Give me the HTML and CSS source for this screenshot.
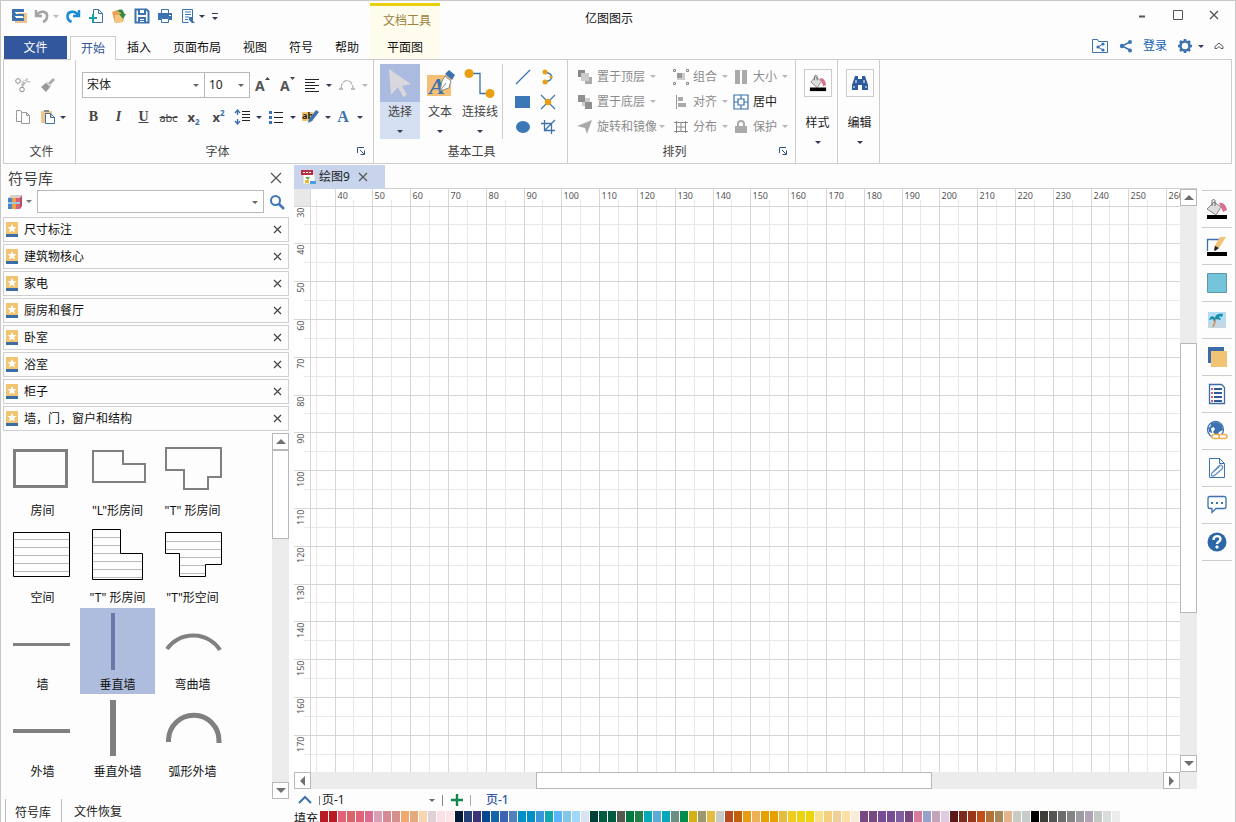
FILE: index.html
```html
<!DOCTYPE html>
<html lang="zh-CN">
<head>
<meta charset="utf-8">
<title>亿图图示</title>
<link rel="stylesheet" href="styles.css">
</head>
<body>
<div class="window">
  <header class="header">
    <div class="header-left">
      <div class="quick">
        <svg class="logo" width="16" height="16" viewBox="0 0 16 16" aria-hidden="true"><path d="M7 5h9v10H4v-3h8V9H7z" fill="#eec48a"/><path d="M1 1h12v3H5v2h8v3H5v1h8v3H1z" fill="#3c72b0"/><path d="M4 4h8v1H4zM4 8h8v1H4z" fill="#fff"/></svg>
        <button class="q" aria-label="撤销"><svg width="16" height="16" viewBox="0 0 16 16"><path d="M2 2v6h6" fill="none" stroke="#a4a4a4" stroke-width="2.400"/><path d="M3 7C6 2 14 3 13 9c0 3-2 4-4 5" fill="none" stroke="#a4a4a4" stroke-width="2.600"/></svg></button>
        <button class="q q-arrow" aria-label="撤销列表"><i class="caret pale"></i></button>
        <button class="q" aria-label="重做"><svg width="16" height="16" viewBox="0 0 16 16"><path d="M14 2v6H8" fill="none" stroke="#1c8cd4" stroke-width="2.400"/><path d="M13 7C10 2 2 3 2.500 9c0 3 2 4 4 5" fill="none" stroke="#1c8cd4" stroke-width="2.600"/></svg></button>
        <button class="q" aria-label="新建"><svg width="16" height="16" viewBox="0 0 16 16"><path d="M5.500 6V1.500h5l4 4v9h-9V12M10.500 1.500v4h4" fill="#fff" stroke="#3c72b0"/><path d="M4 6h2v3h3v2H6v4H4v-4H1V9h3z" fill="#12a0a8"/></svg></button>
        <button class="q" aria-label="打开"><svg width="16" height="16" viewBox="0 0 16 16"><path d="M1 4l5-2 2 2 6 1-2 9-8 1z" fill="#e8a254"/><path d="M4 7l10-1-3 8-7 1z" fill="#f4c87c"/><path d="M6 3c4-3 7-1 7 3h2l-3 5-4-5h2c0-2-2-2-4-3z" fill="#2f8a4a"/></svg></button>
        <button class="q" aria-label="保存"><svg width="16" height="16" viewBox="0 0 16 16"><path d="M1.500 1.500h11l2 2v11h-13z" fill="#fff" stroke="#3c72b0" stroke-width="2"/><path d="M4 1h8v6H4zM4 9h8v6H4z" fill="#3c72b0"/><path d="M6 2h4v3H6zM6 11h4v1H6zM6 13h4v1H6z" fill="#fff"/></svg></button>
        <button class="q" aria-label="打印"><svg width="16" height="16" viewBox="0 0 16 16"><path d="M4.500 6V1.500h7V6" fill="#fff" stroke="#3c72b0"/><path d="M1 5h14v7h-3v-2H4v2H1z" fill="#3c72b0"/><path d="M4.500 10.500h7v4h-7z" fill="#fff" stroke="#3c72b0"/><path d="M12 7h2v1h-2z" fill="#fff"/></svg></button>
        <button class="q" aria-label="预览"><svg width="16" height="16" viewBox="0 0 16 16"><path d="M12.500 9V1.500h-10v13h6" fill="#fff" stroke="#3c72b0"/><path d="M5 4h6M5 6.500h6M5 9h4M5 11.500h3" stroke="#3c72b0"/><path d="M9 9h4v4l2 2h-3l-3-3z" fill="#3c72b0"/></svg></button>
        <button class="q q-arrow" aria-label="预览列表"><i class="caret"></i></button>
        <button class="q q-arrow" aria-label="自定义"><i class="more"></i></button>
      </div>
      <nav class="tabs">
        <button class="tab file">文件</button>
        <button class="tab active">开始</button>
        <button class="tab">插入</button>
        <button class="tab">页面布局</button>
        <button class="tab">视图</button>
        <button class="tab">符号</button>
        <button class="tab">帮助</button>
      </nav>
    </div>
    <div class="context">
      <span class="context-title">文档工具</span>
      <button class="tab context-tab">平面图</button>
    </div>
    <div class="header-right">
      <div class="titlebar">
        <h1 class="title">亿图图示</h1>
        <div class="winbtns">
          <button aria-label="最小化"><svg width="10" height="10" viewBox="0 0 10 10"><path d="M2 6.500h6" stroke="#555" stroke-width="2"/></svg></button>
          <button aria-label="最大化"><svg width="10" height="10" viewBox="0 0 10 10"><path d="M.5.5h9v9h-9z" fill="none" stroke="#555"/></svg></button>
          <button aria-label="关闭"><svg width="10" height="10" viewBox="0 0 10 10"><path d="M1 1l8 8M9 1L1 9" stroke="#555" stroke-width="1.300"/></svg></button>
        </div>
      </div>
      <div class="account">
        <button aria-label="共享文件夹"><svg width="18" height="16" viewBox="0 0 18 16"><path d="M1.500 14.500v-13h5l1 2h9v11z" fill="none" stroke="#3c72b0"/><path d="M12 6L7 9l5 3" fill="none" stroke="#3c72b0"/><circle cx="12" cy="6" r="1.600" fill="#3c72b0"/><circle cx="7" cy="9" r="1.600" fill="#3c72b0"/><circle cx="12" cy="12" r="1.600" fill="#3c72b0"/></svg></button>
        <button aria-label="分享"><svg width="14" height="14" viewBox="0 0 14 14"><path d="M11 3L3 7l8 4" fill="none" stroke="#3c72b0" stroke-width="1.500"/><circle cx="11" cy="3" r="2" fill="#3c72b0"/><circle cx="3" cy="7" r="2.200" fill="#3c72b0"/><circle cx="11" cy="11.500" r="2" fill="#3c72b0"/></svg></button>
        <a href="#login">登录</a>
        <button aria-label="设置"><svg width="16" height="16" viewBox="0 0 16 16"><circle cx="8" cy="8" r="4.500" fill="none" stroke="#3c72b0" stroke-width="2.600"/><path d="M8 1v2M8 13v2M1 8h2M13 8h2M3 3l1.500 1.500M11.500 11.500L13 13M13 3l-1.500 1.500M4.500 11.500L3 13" stroke="#3c72b0" stroke-width="2.600"/></svg></button>
        <i class="caret"></i>
        <button class="fold" aria-label="折叠功能区"><svg width="10" height="10" viewBox="0 0 10 10"><path d="M1 5.500L5 2l4 3.500v2H7L5 5.500 3 7.500H1z" fill="none" stroke="#555"/></svg></button>
      </div>
    </div>
  </header>

  <section class="ribbon">
    <div class="group g-file">
      <div class="rows">
        <div class="row">
          <button class="b" aria-label="剪切"><svg width="18" height="16" viewBox="0 0 18 16"><circle cx="4" cy="4" r="2.300" fill="none" stroke="#8c8c8c"/><circle cx="8" cy="12.500" r="2.300" fill="none" stroke="#8c8c8c"/><path d="M6 4.500l10 1 1-1-7-1M8 10L7 7l6-6 1 1-5 8" fill="#bbb"/></svg></button>
          <button class="b" aria-label="格式刷"><svg width="16" height="16" viewBox="0 0 16 16"><path d="M13 1l2 2-5 5-2-2z" fill="#aaa"/><path d="M7 5l4 4-5 6-5-5z" fill="#999"/><path d="M7 5l4 4-1 1-4-4z" fill="#ddd"/></svg></button>
        </div>
        <div class="row">
          <button class="b" aria-label="复制"><svg width="18" height="16" viewBox="0 0 18 16"><path d="M2.500 1.500h4l3 3v8h-7z" fill="#fff" stroke="#999"/><path d="M7.500 3.500h5l3 3v8h-8zM12.500 3.500v3h3" fill="#fff" stroke="#999"/></svg></button>
          <button class="b" aria-label="粘贴"><svg width="16" height="16" viewBox="0 0 16 16"><path d="M1 2h11v12H1z" fill="#eec88c"/><path d="M4 1h5v2H4z" fill="#888"/><path d="M5.500 4.500h5l4 4v6h-9zM10.500 4.500v4h4" fill="#fff" stroke="#3c72b0"/></svg></button>
          <i class="caret"></i>
        </div>
      </div>
      <div class="group-label">文件</div>
    </div>

    <div class="group g-font">
      <div class="rows">
        <div class="row">
          <span class="combo font-name"><select aria-label="字体"><option>宋体</option></select></span>
          <span class="combo font-size"><select aria-label="字号"><option>10</option></select></span>
          <button class="b" aria-label="增大字号"><svg width="18" height="18" viewBox="0 0 18 18"><text x="1" y="15" class="gA">A</text><path d="M11 4l2.500-3L16 4z" fill="#444"/></svg></button>
          <button class="b" aria-label="减小字号"><svg width="18" height="18" viewBox="0 0 18 18"><text x="1" y="15" class="gA">A</text><path d="M11 1h5l-2.500 3z" fill="#444"/></svg></button>
          <button class="b split" aria-label="对齐"><svg width="16" height="14" viewBox="0 0 16 14"><path d="M1 1.500h14M1 4.500h10M1 7.500h14M1 10.500h10M1 13.500h14" stroke="#222"/></svg><i class="caret"></i></button>
          <button class="b split" aria-label="弧形文字"><svg width="18" height="14" viewBox="0 0 18 14"><path d="M3 10C4 0 14 0 15 10" fill="none" stroke="#aaa" stroke-width="1.200" stroke-dasharray="5 1"/><path d="M1 10h4v2H1zM13 10h4v2h-4z" fill="#bbb"/></svg><i class="caret pale"></i></button>
        </div>
        <div class="row row2">
          <button class="b g bold">B</button>
          <button class="b g ital">I</button>
          <button class="b g und">U</button>
          <button class="b g strike">abc</button>
          <button class="b g ss">x<sub>2</sub></button>
          <button class="b g ss">x<sup>2</sup></button>
          <button class="b split" aria-label="行距"><svg width="16" height="16" viewBox="0 0 16 16"><path d="M3.500 1v5M3.500 10v5M1 4l2.500-3L6 4M1 12l2.500 3L6 12" fill="none" stroke="#3c72b0" stroke-width="1.400"/><path d="M8 2.500h8M8 5.500h8M8 8.500h8M8 11.500h8" stroke="#222"/></svg><i class="caret"></i></button>
          <button class="b split" aria-label="项目符号"><svg width="16" height="16" viewBox="0 0 16 16"><path d="M1 2h3v3H1zM1 7h3v3H1zM1 12h3v3H1z" fill="#3c72b0"/><path d="M6 3.500h9M6 8.500h9M6 13.500h9" stroke="#222"/></svg><i class="caret"></i></button>
          <button class="b split" aria-label="突出显示"><svg width="18" height="16" viewBox="0 0 18 16"><path d="M1 3h11v9H1z" fill="#f4c46c"/><text x="1" y="10" class="gab">ab</text><path d="M15 1l3 2-7 9-4 2 1-4z" fill="#3c72b0"/></svg><i class="caret"></i></button>
          <button class="b split fontcolor" aria-label="字体颜色">A<i class="caret"></i></button>
        </div>
      </div>
      <div class="group-label">字体</div>
      <button class="launch" aria-label="字体设置"><svg width="8" height="8" viewBox="0 0 8 8"><path d="M.5 6V.5H7M3 3l4 4M7.500 3.500v4h-4" fill="none" stroke="#2c5488"/></svg></button>
    </div>

    <div class="group g-basic">
      <div class="basic">
        <button class="big selected"><span class="pic"><svg width="26" height="32" viewBox="0 0 26 32"><path d="M2 2l22 15-9 2 5 9-4 2-5-10-7 8z" fill="#d8d8dc"/></svg></span>选择<i class="caret"></i></button>
        <button class="big"><span class="pic"><svg width="30" height="32" viewBox="0 0 30 32"><path d="M2 8h24v21H2z" fill="#f4c078"/><text x="4" y="27" class="gTxt">A</text><path d="M20 9l6 5-2 7-9 3 2-10z" fill="#fff" stroke="#888"/><path d="M15 24l6-8" stroke="#888"/><path d="M24 3l6 5-3 5-7-6z" fill="#3c72b0"/></svg></span>文本<i class="caret"></i></button>
        <button class="big"><span class="pic"><svg width="34" height="32" viewBox="0 0 34 32"><path d="M6 6.500h11v20h10" fill="none" stroke="#3c72b0" stroke-width="1.300"/><circle cx="6" cy="6.500" r="4.500" fill="#e8a010"/><circle cx="27" cy="26.500" r="4.500" fill="#e8a010"/></svg></span>连接线<i class="caret"></i></button>
        <div class="shapes">
          <button aria-label="直线"><svg width="16" height="16" viewBox="0 0 16 16"><path d="M1 15L15 1" stroke="#3c72b0" stroke-width="1.200"/></svg></button>
          <button aria-label="弧线"><svg width="16" height="16" viewBox="0 0 16 16"><path d="M5 3c9 2 9 8 0 10" fill="none" stroke="#3c72b0" stroke-width="1.300"/><circle cx="5" cy="3" r="2.500" fill="#e8a010"/><circle cx="5" cy="13" r="2.500" fill="#e8a010"/><circle cx="11" cy="8" r="1.500" fill="#e8a010"/></svg></button>
          <button aria-label="矩形"><svg width="16" height="16" viewBox="0 0 16 16"><path d="M0 2h15v12H0z" fill="#3c78b8"/></svg></button>
          <button aria-label="连接点"><svg width="16" height="16" viewBox="0 0 16 16"><path d="M1 1l14 14M15 1L1 15" stroke="#3c72b0" stroke-width="1.200"/><circle cx="8" cy="8" r="3.200" fill="#e8a010"/></svg></button>
          <button aria-label="椭圆"><svg width="16" height="16" viewBox="0 0 16 16"><ellipse cx="8" cy="8" rx="7" ry="6" fill="#3c78b8"/></svg></button>
          <button aria-label="裁剪"><svg width="16" height="16" viewBox="0 0 16 16"><path d="M4.500 1v10.500H15M1 4.500h10.500V15M15 1L4.500 11.500" fill="none" stroke="#3c72b0" stroke-width="1.300"/></svg></button>
        </div>
      </div>
      <div class="group-label">基本工具</div>
    </div>

    <div class="group g-arrange">
      <div class="arrange">
        <button class="cmd"><svg width="16" height="16" viewBox="0 0 16 16"><path d="M1 1h7v7H1z" fill="#888"/><path d="M8 8h7v7H8z" fill="#aaa"/><path d="M4 4h8v8H4z" fill="#ccc"/></svg>置于顶层<i class="caret pale"></i></button>
        <button class="cmd"><svg width="16" height="16" viewBox="0 0 16 16"><path d="M4 4h8v7H4z" fill="#ccc"/><path d="M4 4h5v5H4z" fill="#999"/><path d="M.5.5h2v2h-2zM13.500.5h2v2h-2zM.5 13.500h2v2h-2zM13.500 13.500h2v2h-2z" fill="#fff" stroke="#888"/></svg>组合<i class="caret pale"></i></button>
        <button class="cmd"><svg width="16" height="16" viewBox="0 0 16 16"><path d="M2 1h5v14H2zM9 1h5v14H9z" fill="#aaa"/></svg>大小<i class="caret pale"></i></button>
        <button class="cmd"><svg width="16" height="16" viewBox="0 0 16 16"><path d="M5 4h8v8H5z" fill="#ccc"/><path d="M1 1h7v7H1zM8 8h7v7H8z" fill="#909090"/></svg>置于底层<i class="caret pale"></i></button>
        <button class="cmd"><svg width="16" height="16" viewBox="0 0 16 16"><path d="M3.500 1v14" stroke="#999"/><path d="M5 3h5v4H5zM5 9h8v4H5z" fill="#aaa"/></svg>对齐<i class="caret pale"></i></button>
        <button class="cmd on"><svg width="16" height="16" viewBox="0 0 16 16"><path d="M1 1h14v14H1zM5 5h6v6H5zM8 1v4M8 11v4M1 8h4M11 8h4" fill="none" stroke="#3c72b0" stroke-width="1.200"/></svg>居中</button>
        <button class="cmd"><svg width="16" height="16" viewBox="0 0 16 16"><path d="M15 1L10 15 8 9 0 7z" fill="#aaa"/></svg>旋转和镜像<i class="caret pale"></i></button>
        <button class="cmd"><svg width="16" height="16" viewBox="0 0 16 16"><path d="M3.500 2v12M12.500 2v12M1 3.500h14M1 12.500h14M4 8h8M8 4v8" fill="none" stroke="#888"/></svg>分布<i class="caret pale"></i></button>
        <button class="cmd"><svg width="16" height="16" viewBox="0 0 16 16"><path d="M2 7h12v7H2z" fill="#aaa"/><path d="M5 8V5c0-4 6-4 6 0v3" fill="none" stroke="#aaa" stroke-width="2"/></svg>保护<i class="caret pale"></i></button>
      </div>
      <div class="group-label">排列</div>
      <button class="launch" aria-label="排列设置"><svg width="8" height="8" viewBox="0 0 8 8"><path d="M.5 6V.5H7M3 3l4 4M7.500 3.500v4h-4" fill="none" stroke="#2c5488"/></svg></button>
    </div>

    <div class="group g-single">
      <button class="boxed"><span class="box"><svg width="18" height="18" viewBox="0 0 20 20"><path d="M7 3l7 5-5 7-7-6z" fill="#ddd" stroke="#888"/><path d="M6 7V3c0-2 3-2 3 0v4" fill="none" stroke="#666"/><path d="M12 5c4-1 6 2 7 7l-3 2-2-5z" fill="#d8708c"/><path d="M1 15h18v4H1z" fill="#000"/></svg></span>样式<i class="caret"></i></button>
    </div>
    <div class="group g-single">
      <button class="boxed"><span class="box"><svg width="18" height="18" viewBox="0 0 18 18"><path d="M4 2h3v3h4V2h3l3 9v5h-6v-5H7v5H1v-5z" fill="#2c5c9c"/><path d="M5 6v3M13 6v3M3 12v2M15 12v2" stroke="#fff"/></svg></span>编辑<i class="caret"></i></button>
    </div>
  </section>

  <main class="main">
    <aside class="library">
      <div class="lib-head"><h2>符号库</h2><button aria-label="关闭面板"><svg width="12" height="12" viewBox="0 0 12 12"><path d="M1 1l10 10M11 1L1 11" stroke="#555" stroke-width="1.200"/></svg></button></div>
      <div class="lib-search">
        <button class="books" aria-label="选择库"><svg width="16" height="16" viewBox="0 0 16 16"><path d="M1 4l3-3h11l-2 3z" fill="#d8d0c8"/><path d="M1 4h4v11H1z" fill="#4c84c8"/><path d="M5 4h4v11H5z" fill="#f0a040"/><path d="M9 4h4v11H9z" fill="#d86070"/><path d="M13 4l2-3v11l-2 3z" fill="#b84c68"/><path d="M1 8h12v2H1z" fill="#9cc8e8"/></svg><i class="caret soft"></i></button>
        <span class="combo search-box"><input type="text" aria-label="搜索符号"></span>
        <button class="find" aria-label="搜索"><svg width="16" height="16" viewBox="0 0 16 16"><circle cx="6.500" cy="6.500" r="4.500" fill="none" stroke="#3c78b8" stroke-width="2"/><path d="M10 10l5 5" stroke="#3c78b8" stroke-width="2.500"/></svg></button>
      </div>
      <ul class="lib-list" id="libraries"></ul>
      <div class="symbols">
        <div class="symbol-grid">
          <button class="symbol"><svg width="75" height="66" viewBox="0 0 75 66"><path d="M9.500 16.500h52v36h-52z" fill="none" stroke="#808080" stroke-width="3"/></svg>房间</button>
          <button class="symbol"><svg width="75" height="66" viewBox="0 0 75 66"><path d="M13 17H43V30H65V48H13Z" fill="none" stroke="#808080" stroke-width="2"/></svg>"L"形房间</button>
          <button class="symbol"><svg width="75" height="66" viewBox="0 0 75 66"><path d="M11 14H66V43H53V55H29V36H11Z" fill="none" stroke="#808080" stroke-width="2"/></svg>"T" 形房间</button>
          <button class="symbol"><svg width="75" height="66" viewBox="0 0 75 66"><path d="M8 18.500h56M8 26.500h56M8 34.500h56M8 42.500h56M8 50.500h56" stroke="#bbb"/><path d="M8.500 11.500h56v44h-56z" fill="none" stroke="#000"/></svg>空间</button>
          <button class="symbol"><svg width="75" height="66" viewBox="0 0 75 66"><path d="M12 16.500h28M12 24.500h28M12 32.500h28M12 40.500h50M12 48.500h50M12 56.500h50" stroke="#bbb"/><path d="M12.500 8.500H40.500V32.500H62.500V58.500H12.500Z" fill="none" stroke="#000"/></svg>"T" 形房间</button>
          <button class="symbol"><svg width="75" height="66" viewBox="0 0 75 66"><path d="M10 20.500h56M10 28.500h56M24 36.500h42M24 44.500h26M24 52.500h26" stroke="#bbb"/><path d="M10.500 11.500H66.500V43.500H50.500V55.500H24.500V32.500H10.500Z" fill="none" stroke="#000"/></svg>"T"形空间</button>
          <button class="symbol"><svg width="75" height="66" viewBox="0 0 75 66"><path d="M8 35h57v3H8z" fill="#808080"/></svg>墙</button>
          <button class="symbol selected"><svg width="75" height="66" viewBox="0 0 75 66"><path d="M31 5h4v57h-4z" fill="#6878a8"/></svg>垂直墙</button>
          <button class="symbol"><svg width="75" height="66" viewBox="0 0 75 66"><path d="M12 41A31 29 0 0 1 65 42" fill="none" stroke="#808080" stroke-width="4"/></svg>弯曲墙</button>
          <button class="symbol"><svg width="75" height="66" viewBox="0 0 75 66"><path d="M8 34h57v4H8z" fill="#808080"/></svg>外墙</button>
          <button class="symbol"><svg width="75" height="66" viewBox="0 0 75 66"><path d="M30 5h6v56h-6z" fill="#808080"/></svg>垂直外墙</button>
          <button class="symbol"><svg width="75" height="66" viewBox="0 0 75 66"><path d="M13.500 47V45A25 25 0 0 1 64 46V48" fill="none" stroke="#808080" stroke-width="5"/></svg>弧形外墙</button>
        </div>
        <div class="scroll vert">
          <button class="sb" aria-label="向上"><i class="tri up"></i></button>
          <div class="thumb lib-thumb"></div><div class="lib-rest"></div>
          <button class="sb" aria-label="向下"><i class="tri down"></i></button>
        </div>
      </div>
      <div class="lib-tabs"><button class="current">符号库</button><button>文件恢复</button></div>
    </aside>

    <section class="work">
      <div class="doc-tabs">
        <div class="doc-tab">
          <svg width="16" height="16" viewBox="0 0 16 16" aria-hidden="true"><path d="M3 2h8l4 4v9H3z" fill="#fff" stroke="#ccc"/><path d="M1 1h12v5H1z" fill="#b83040"/><path d="M3 3h2v1H3zM6 3h2v1H6zM9 3h2v1H9z" fill="#fff"/><path d="M5 8h5l-2 3z" fill="#6c9c50"/><path d="M5 11h4v3H5z" fill="#f0b830"/><path d="M10 12h6v3h-6z" fill="#48a0e0"/></svg>
          <span>绘图9</span>
          <button aria-label="关闭文档"><svg width="10" height="10" viewBox="0 0 10 10"><path d="M1 1l8 8M9 1L1 9" stroke="#555" stroke-width="1.200"/></svg></button>
        </div>
      </div>
      <div class="canvas-area">
        <div class="plot"><svg id="plot" width="100%" height="100%"></svg></div>
        <div class="scroll vert">
          <button class="sb" aria-label="向上滚动"><i class="tri up"></i></button>
          <div class="v-before"></div><div class="thumb v-thumb"></div><div class="v-after"></div>
          <button class="sb" aria-label="向下滚动"><i class="tri down"></i></button>
        </div>
        <div class="scroll horiz">
          <button class="sb" aria-label="向左滚动"><i class="tri left"></i></button>
          <div class="h-before"></div><div class="thumb h-thumb"></div><div class="h-after"></div>
          <button class="sb" aria-label="向右滚动"><i class="tri right"></i></button>
        </div>
        <div class="scroll-corner"></div>
      </div>
      <div class="pages">
        <button class="p-up" aria-label="展开"><svg width="14" height="10" viewBox="0 0 14 10"><path d="M1 8l6-6 6 6" fill="none" stroke="#3c72b0" stroke-width="2"/></svg></button>
        <span class="combo page-pick"><select aria-label="页"><option>页-1</option></select></span>
        <button class="p-add" aria-label="添加页"><svg width="12" height="12" viewBox="0 0 12 12"><path d="M6 0v12M0 6h12" stroke="#10884c" stroke-width="2.400"/></svg></button>
        <button class="page-current">页-1</button>
      </div>
      <div class="fill"><span>填充</span><div class="swatches" id="swatches"></div></div>
    </section>

    <aside class="side">
      <button aria-label="填充"><svg width="22" height="22" viewBox="0 0 22 22"><path d="M8 4l7 5-5 8-9-6z" fill="#ddd" stroke="#888"/><path d="M6 8V3c0-2 3-2 3 0v5" fill="none" stroke="#666"/><path d="M13 5c4-1 7 2 8 7l-4 2-2-5z" fill="#d8708c"/><path d="M1 17h20v4H1z" fill="#000"/></svg></button>
      <button aria-label="线条"><svg width="22" height="22" viewBox="0 0 22 22"><path d="M1.500 16V4.500H15" fill="none" stroke="#3c72b0" stroke-width="1.300"/><path d="M14 2h6l-7 11-5-1z" fill="#f0c478"/><path d="M9 11l4 2-4 3-1-1z" fill="#222"/><path d="M1 17h20v4H1z" fill="#000"/></svg></button>
      <button aria-label="主题"><svg width="22" height="22" viewBox="0 0 22 22"><path d="M1.500 1.500h19v19h-19z" fill="#74c4dc" stroke="#6098a8"/></svg></button>
      <button aria-label="图片"><svg width="22" height="22" viewBox="0 0 22 22"><path d="M2 3h18v16H2z" fill="#b4dcf4"/><path d="M2 13h18v6H2z" fill="#c4d8e4"/><path d="M3 11c2-6 5-3 6-2 0-4 5-5 8-4l-1 3-3-1 2 4-5-1-2 3-1-3z" fill="#1890a8"/><path d="M10 10l-3 8" stroke="#d48c5c" stroke-width="1.500"/></svg></button>
      <button aria-label="图层"><svg width="22" height="22" viewBox="0 0 22 22"><path d="M2 1h16v16H2z" fill="#3c6ca8"/><path d="M5 5h16v16H5z" fill="#f0c474"/></svg></button>
      <button aria-label="大纲"><svg width="22" height="22" viewBox="0 0 22 22"><path d="M3.500 1.500h12l3 3v16h-15z" fill="#fff" stroke="#3c6ca8" stroke-width="1.300"/><path d="M8 6h8M8 10h8M8 14h8M8 18h8" stroke="#2c5c9c" stroke-width="2"/><path d="M5 5h2v2H5zM5 9h2v2H5zM5 13h2v2H5zM5 17h2v2H5z" fill="#c86070"/></svg></button>
      <button aria-label="超链接"><svg width="22" height="22" viewBox="0 0 22 22"><circle cx="9.500" cy="9.500" r="8" fill="#fff" stroke="#3c72b0" stroke-width="1.300"/><path d="M11 2l5 3 1 5-4 2-2 5-4-5 2-3-3-4zM2 6l3 2 1 5-3-1z" fill="#3c72b0"/><path d="M5 3l5-1-1 4-5 3z" fill="#3c72b0"/><rect x="6" y="14.500" width="8" height="4" rx="2" fill="#fff" stroke="#f0b050" stroke-width="1.500"/><rect x="13" y="14.500" width="8" height="4" rx="2" fill="#fff" stroke="#f0b050" stroke-width="1.500"/></svg></button>
      <button aria-label="附件"><svg width="22" height="22" viewBox="0 0 22 22"><path d="M3.500 1.500h10l5 5v14h-15zM13.500 1.500v5h5" fill="#fff" stroke="#3c72b0"/><path d="M14 9l-8 7c-2 3 1 4 3 2l7-6c2-3-1-5-3-3l-6 6" fill="none" stroke="#5c8cc4" stroke-width="1.200"/></svg></button>
      <button aria-label="批注"><svg width="22" height="22" viewBox="0 0 22 22"><path d="M4 2.500h14q2 0 2 2v8q0 2-2 2h-8l-4 4v-4H4q-2 0-2-2v-8q0-2 2-2z" fill="#fff" stroke="#3c72b0" stroke-width="1.300"/><path d="M5 8h2v2H5zM10 8h2v2h-2zM15 8h2v2h-2z" fill="#3c72b0"/></svg></button>
      <button aria-label="帮助"><svg width="22" height="22" viewBox="0 0 22 22"><circle cx="11" cy="11" r="9.500" fill="#2c68a8"/><path d="M7.500 9c0-5 7-5 7-1 0 3-3.500 2.500-3.500 5" fill="none" stroke="#fff" stroke-width="2.400"/><path d="M10 15h2v2h-2z" fill="#fff" stroke="#fff"/></svg></button>
    </aside>
  </main>
</div>
<script src="app.js"></script>
</body>
</html>
```

FILE: styles.css
```css
* { box-sizing: border-box; }
body {
  margin: 0;
  font: 12px/18px "Noto Sans", "Noto Sans CJK SC", sans-serif;
  color: #222;
  background: #fdfdfd;
}
button, select, input { font: inherit; color: inherit; }
button {
  padding: 0;
  border: 0;
  background: none;
  display: flex;
  align-items: center;
  justify-content: center;
}
svg { display: block; flex: none; }
h1, h2, ul { margin: 0; padding: 0; font-weight: 400; }

.window {
  height: 100vh;
  display: flex;
  flex-direction: column;
  border: 1px solid #c8c8c8;
  border-bottom: 0;
  overflow: hidden;
}

.caret {
  flex: none;
  width: 0;
  height: 0;
  border: 3px solid transparent;
  border-top-color: #333c58;
  border-bottom: 0;
}
.caret.pale { border-top-color: #b8b8b8; }
.caret.soft { border-top-color: #777; }

/* header */
.header { display: flex; flex: none; height: 58px; }
.header-left { flex: none; width: 369px; display: flex; flex-direction: column; justify-content: space-between; }
.quick { display: flex; align-items: center; height: 30px; padding-left: 10px; }
.logo { margin-right: 6px; }
.q { width: 17px; margin-right: 6px; }
.q-arrow { width: 7px; margin-right: 5px; margin-left: -4px; }
.q + .q-arrow + .q-arrow { margin-left: 1px; }
.more { width: 6px; height: 7px; border-top: 1px solid #333c58; display: grid; align-content: end; }
.more::after { content: ""; border: 3px solid transparent; border-top-color: #333c58; border-bottom: 0; }
.tabs { display: flex; padding-left: 3px; }
.tab { height: 23px; padding: 0 11px; border: 1px solid transparent; border-width: 1px 0 0; color: #111; }
.tab.file { width: 63px; margin-right: 3px; background: #33579c; color: #fff; }
.tab.active { height: 24px; margin-bottom: -1px; padding: 0 10px; border: 1px solid #ccc; border-bottom: 0; background: #fdfdfd; color: #2f5597; z-index: 1; }
.context { flex: none; width: 70px; margin-top: 2px; border-top: 3px solid #e8d010; background: #fefcec; display: flex; flex-direction: column; align-items: center; justify-content: space-between; }
.context-title { padding: 6px 0 0 4px; color: #9c8040; }
.context-tab { padding: 0; }
.header-right { flex: 1; display: flex; flex-direction: column; justify-content: space-between; }
.titlebar { display: flex; justify-content: space-between; padding: 8px 16px 0 145px; }
.title { font-size: 12px; line-height: 20px; color: #111; }
.winbtns { display: flex; gap: 26px; height: 12px; }
.account { display: flex; align-items: center; height: 24px; gap: 10px; padding: 0 11px 2px 0; justify-content: flex-end; }
.account a { color: #1464b8; text-decoration: none; }
.account .caret { margin-left: -5px; }

/* ribbon */
.ribbon { flex: none; display: flex; height: 105px; margin: 0 3px 0 2px; border: 1px solid #ccc; }
.group { position: relative; flex: none; display: flex; flex-direction: column; justify-content: space-between; padding: 4px 0 2px; border-right: 1px solid #ccc; }
.group-label { text-align: center; color: #444; }
.launch { position: absolute; right: 8px; bottom: 8px; }
.g-file { width: 72px; }
.g-file .group-label { padding-left: 4px; }
.g-font { width: 298px; }
.g-font .group-label, .g-arrange .group-label { padding-right: 14px; }
.g-basic { width: 194px; }
.g-basic .group-label { padding-left: 2px; }
.g-arrange { width: 228px; }
.g-single { width: 42px; }
.rows { display: grid; gap: 6px; padding-top: 8px; }
.row { display: flex; align-items: center; height: 26px; padding-left: 6px; }
.row2 { padding-left: 5px; }
.b { width: 25px; height: 26px; flex: none; }
.split { width: 35px; gap: 6px; }
.row2 .split { width: 34px; }
.combo { position: relative; display: flex; border: 1px solid #b8b8b8; background: #fff; }
.combo select, .combo input { appearance: none; width: 100%; border: 0; padding: 0 4px; margin: 0; background: none; outline: 0; }
.combo::after { content: ""; position: absolute; right: 5px; top: 50%; margin-top: -1px; border: 3px solid transparent; border-top-color: #666; border-bottom: 0; pointer-events: none; }
.font-name { width: 123px; height: 26px; }
.font-size { width: 46px; height: 26px; margin-left: -1px; }
.gA { font: bold 14px "Noto Sans", sans-serif; fill: #555; }
.gab { font: bold 9px "Noto Sans", sans-serif; fill: #222; }
.gTxt { font: italic bold 24px "Liberation Serif", serif; fill: #3c72b0; }
.g { font: bold 14px "Liberation Serif", serif; color: #444; }
.ital { font-style: italic; }
.und { text-decoration: underline; }
.strike { font: 11px "Noto Sans", sans-serif; text-decoration: line-through; }
.ss { font: bold 13px "Noto Sans", sans-serif; }
.ss sub, .ss sup { font-size: 8px; line-height: 8px; color: #3c72b0; }
.ss sub { align-self: flex-end; margin-bottom: 4px; }
.ss sup { align-self: flex-start; margin-top: 5px; }
.fontcolor { font: bold 16px "Liberation Serif", serif; color: #3c72b0; gap: 8px; }
.basic { display: flex; padding-left: 6px; }
.big { width: 40px; height: 75px; flex-direction: column; justify-content: flex-start; white-space: nowrap; color: #444; }
.pic { width: 40px; height: 38px; display: grid; place-items: center; flex: none; margin-bottom: 1px; }
.big .caret { margin-top: 9px; }
.selected.big { background: #d4dff2; }
.selected .pic { background: #aabbdf; }
.shapes { display: grid; grid-template-columns: 25px 25px; grid-auto-rows: 25px; margin-left: 2px; padding-left: 7px; border-left: 1px solid #ccc; }
.arrange { display: grid; grid-template-columns: 96px 60px 60px; grid-auto-rows: 25px; padding-left: 9px; }
.cmd { justify-content: flex-start; gap: 4px; color: #8c8c8c; white-space: nowrap; }
.cmd.on { color: #222; }
.cmd .caret { margin-left: 1px; }
.cmd:nth-child(7) .caret { margin-left: -2px; }
.boxed { flex-direction: column; color: #222; padding: 5px 0 0 2px; }
.box { width: 28px; height: 28px; border: 1px solid #ccc; display: grid; place-items: center; margin-bottom: 17px; }
.boxed .caret { margin-top: 9px; }

/* symbol library */
.main { flex: 1; min-height: 0; display: flex; }
.library { flex: none; width: 288px; margin-right: 5px; padding-left: 2px; display: flex; flex-direction: column; }
.lib-head { display: flex; justify-content: space-between; align-items: center; height: 26px; padding: 2px 7px 0 5px; }
.lib-head h2 { font-size: 15px; line-height: 22px; color: #444; }
.lib-search { display: flex; align-items: center; height: 23px; padding-left: 4px; }
.books { gap: 3px; width: 30px; justify-content: flex-start; }
.search-box { flex: 1; height: 23px; }
.find { width: 25px; }
.lib-list { list-style: none; display: grid; gap: 2px; padding-top: 4px; }
.lib-list li { display: flex; align-items: center; height: 25px; padding: 0 6px 0 2px; border: 1px solid #d0d0d0; color: #111; }
.lib-list span { flex: 1; padding-left: 6px; }
.lib-list b { font: 12px/18px "Noto Sans CJK TC", sans-serif; }
.symbols { flex: 1; min-height: 0; display: flex; justify-content: space-between; margin-top: 2px; }
.symbol-grid { display: grid; grid-template-columns: repeat(3, 75px); grid-auto-rows: 86px; gap: 1px 0; padding: 1px 0 0 2px; overflow: hidden; }
.symbol { flex-direction: column; justify-content: flex-start; gap: 2px; white-space: nowrap; color: #111; }
.symbol.selected { background: #aebcde; }
.lib-tabs { flex: none; display: flex; height: 23px; padding: 0 0 0 2px; }
.lib-tabs button { padding: 3px 12px 0; }
.lib-tabs .current { padding: 4px 10px 0 9px; border: 1px solid #bbb; border-width: 0 1px; }

/* scroll bars */
.scroll { display: flex; background: #ececec; }
.vert { width: 17px; flex-direction: column; }
.sb { flex: none; width: 17px; height: 17px; border: 1px solid #b8b8b8; background: #fff; }
.thumb { border: 1px solid #b8b8b8; background: #fff; }
.tri { border: 4px solid transparent; }
.up { border-top: 0; border-width: 0 5px 5px; border-bottom-color: #707070; }
.down { border-width: 5px 5px 0; border-top-color: #707070; }
.left { border-width: 5px 5px 5px 0; border-right-color: #707070; }
.right { border-width: 5px 0 5px 5px; border-left-color: #707070; }
.lib-thumb { flex: 88; }
.lib-rest { flex: 245; }
.v-before { flex: 137; }
.v-thumb { flex: 269; }
.v-after { flex: 143; }
.h-before { flex: 226; }
.h-thumb { flex: 395; }
.h-after { flex: 232; }
.scroll-corner { background: #ececec; }

/* drawing area */
.work { flex: 1; min-width: 0; display: flex; flex-direction: column; }
.doc-tabs { flex: none; height: 25px; padding-top: 1px; border-bottom: 1px solid #d0d0d0; }
.doc-tab { display: flex; align-items: center; width: 91px; height: 24px; padding-left: 6px; gap: 3px; background: #c8d4ec; }
.doc-tab button { margin-left: 5px; }
.canvas-area { flex: 1; min-height: 0; display: grid; grid-template: 1fr 17px / 1fr 17px; }
.plot { min-width: 0; min-height: 0; overflow: hidden; background: #fff; }
.plot text { font: 9px "Noto Sans", sans-serif; fill: #555; }
.pages { flex: none; display: flex; align-items: center; height: 22px; }
.p-up { width: 22px; }
.page-pick { width: 124px; height: 22px; border-width: 0; background: none; margin-left: 3px; }
.page-pick select { background: linear-gradient(#888, #888) 0 center / 1px 9px no-repeat, linear-gradient(#888, #888) right center / 1px 11px no-repeat; padding: 0 3px; }
.page-pick::after { right: 8px; }
.p-add { width: 28px; height: 11px; border-right: 1px solid #aaa; }
.page-current { margin-left: 15px; color: #3058a0; font-weight: 500; }
.fill { flex: none; display: flex; height: 11px; overflow: hidden; gap: 1px; }
.fill span { line-height: 16px; color: #111; width: 25px; white-space: nowrap; }
.swatches { display: flex; gap: 1px; }
.swatches i { width: 8px; height: 16px; }

/* right tool strip */
.side { flex: none; width: 30px; margin: 26px 3px 0 5px; }
.side button { width: 100%; height: 37px; border-top: 1px solid #ccc; }
.side button:last-child { height: 38px; border-bottom: 1px solid #ccc; }
```

FILE: app.js
```javascript
const libraries = ["尺寸标注", "建筑物核心", "家电", "厨房和餐厅", "卧室", "浴室", "柜子", "墙，门，窗户和结构"];
document.getElementById("libraries").innerHTML = libraries.map(name =>
  `<li><svg width="12" height="16" viewBox="0 0 12 16"><path d="M0 0h12v12H0z" fill="#f0c470"/><path d="M6 2l1.300 3 3.200.3-2.400 2 .8 3.200L6 8.800l-2.900 1.700.8-3.200-2.400-2L4.700 5z" fill="#fff"/><path d="M0 12h12v3H0z" fill="#3c6ca8"/></svg><span>${name.replace(/，/g, "<b>，</b>")}</span><button aria-label="关闭${name}"><svg width="9" height="9" viewBox="0 0 9 9"><path d="M1 1l7 7M8 1L1 8" stroke="#444" stroke-width="1.200"/></svg></button></li>`
).join("");

const colors = ("b81c22 b81c22 e06377 d96666 e06377 db6b8f d9a0b5 d68a94 d68f8f f0a86c e3ab7d fad6ae e0d0d8 fce0e6 fce4e8 " +
  "001a38 253f78 3c3278 0a4590 1464a8 3d63b3 5280b8 0090c8 0090c8 3a96dc 10a8b0 5cb4f8 82c8e4 a0d8fa d8e4f4 " +
  "003f38 005c40 005c40 55584c 007840 208048 08a8b8 5cacd8 08a8b8 6b8f80 008c4c d4b010 9c9870 e4bc40 c8ccc8 " +
  "b84c20 c06008 e89c10 eeb058 e8a000 e8a000 e4bc40 f0cc20 ecd40c ecd40c f8e08c f4d07c f0d098 fce0a8 f8ecd8 " +
  "784880 784880 784c94 784c94 8060a0 784880 d87c9c 98a0cc c4a4b8 e0cce0 " +
  "5c1818 7c2c1c 983818 c05018 b07438 a88858 e4b48c c8ccc4 c8ccc8 " +
  "000000 3c3c38 545454 6c6c6c 848484 9c9ca0 b0a4b4 c4c8c4 d8dcdc ececec").split(" ");
document.getElementById("swatches").innerHTML = colors.map(c => `<i style="background:#${c}"></i>`).join("");

const plot = document.getElementById("plot");
const RULER = 17;
const SCALE = 3.78;

/* Rulers along the top and left edge, with a line every 5 mm and a label every 10 mm. */
function drawPlot() {
  const { clientWidth: w, clientHeight: h } = plot.parentElement;
  let minor = "", major = "", labels = "";
  for (let mm = 35; ; mm += 5) {
    const x = Math.floor((mm - 40) * SCALE + 41) + 0.5;
    if (x > w) break;
    if (mm % 10) minor += `M${x} 11V${h}`;
    else {
      major += `M${x} 0V${h}`;
      labels += `<text x="${x + 2}" y="10">${mm}</text>`;
    }
  }
  for (let mm = 30; ; mm += 5) {
    const y = Math.floor((mm - 30) * SCALE + RULER) + 0.5;
    if (y > h) break;
    if (mm % 10) minor += `M10 ${y}H${w}`;
    else {
      major += `M0 ${y}H${w}`;
      labels += `<text transform="translate(10 ${y + 1}) rotate(-90)" text-anchor="end">${mm}</text>`;
    }
  }
  plot.innerHTML = `<path d="${minor}" stroke="#e8e8e8"/><path d="${major}M16.500 0V${h}" stroke="#d6d6d6"/>` +
    `<rect width="16" height="17" fill="#e8e8e8"/>${labels}`;
}
drawPlot();
addEventListener("resize", drawPlot);
```
